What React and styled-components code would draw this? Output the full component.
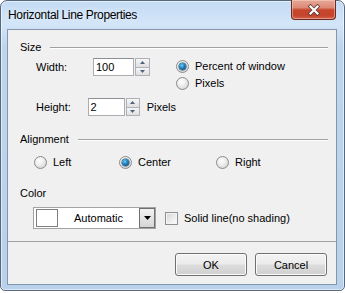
import styled, { createGlobalStyle } from "styled-components";

const Global = createGlobalStyle`
  html, body { margin: 0; padding: 0; background: #fff; }
  body { font-family: "Liberation Sans", Arial, sans-serif; font-size: 11px; color: #000; }
`;

const Window = styled.div`
  width: 345px;
  height: 291px;
  box-sizing: border-box;
  border: 1px solid #56687c;
  border-radius: 7px 7px 5px 5px;
  background: linear-gradient(to bottom, #c4dbf4 0%, #d3e5f8 8%, #bed5ee 16%, #b9d1eb 100%);
  box-shadow: inset 0 0 0 1px rgba(255, 255, 255, 0.55);
  display: flex;
  flex-direction: column;
`;

const TitleBar = styled.div`
  height: 28px;
  display: flex;
  align-items: flex-start;
  padding-left: 7px;
`;

const Title = styled.div`
  margin-top: 7px;
  font-size: 12px;
  line-height: 14px;
  letter-spacing: -0.35px;
  color: #000;
  text-shadow: 0 0 6px rgba(255, 255, 255, 0.9);
`;

const CloseButton = styled.div`
  margin-left: auto;
  margin-right: 8px;
  margin-top: -1px;
  width: 45px;
  height: 20px;
  box-sizing: border-box;
  border: 1px solid #6a2a1f;
  border-top: none;
  border-radius: 0 0 4px 4px;
  background: linear-gradient(to bottom, #e8a797 0%, #dc8a76 40%, #c7472e 52%, #c5432a 80%, #d4624a 100%);
  box-shadow: inset 0 0 0 1px rgba(255, 220, 210, 0.45);
  display: flex;
  align-items: center;
  justify-content: center;
`;

const Client = styled.div`
  height: 256px;
  margin: 0 7px 0 6px;
  box-sizing: border-box;
  border: 1px solid #8396ab;
  background: #f0f0f0;
  display: flex;
  flex-direction: column;
`;

const Body = styled.div`
  flex: 1;
  padding: 11px 8px 0 12px;
  display: flex;
  flex-direction: column;
`;

const SectionHeader = styled.div`
  display: flex;
  align-items: center;
  height: 13px;
  line-height: 13px;
  margin-top: ${({ $top }) => $top || 0}px;
`;

const Rule = styled.div`
  flex: 1;
  margin-left: 9px;
  border-top: 1px solid #a0a0a0;
  border-bottom: 1px solid #fff;
`;

const SizeBody = styled.div`
  display: flex;
  margin-top: 4px;
`;

const LeftCol = styled.div`
  width: 156px;
  box-sizing: border-box;
  padding-left: 16px;
  display: flex;
  flex-direction: column;
  gap: 22px;
`;

const FieldRow = styled.div`
  display: flex;
  align-items: center;
  height: 18px;
`;

const FieldLabel = styled.span`
  width: 57px;
`;

const TextBox = styled.div`
  width: 41px;
  height: 18px;
  box-sizing: border-box;
  border: 1px solid #abadb3;
  border-top-color: #8c8f96;
  background: #fff;
  padding-left: 2px;
  line-height: 16px;
`;

const Spinner = styled.div`
  width: 15px;
  height: 18px;
  margin-left: 1px;
  display: flex;
  flex-direction: column;
`;

const SpinButton = styled.div`
  flex: 1;
  box-sizing: border-box;
  border: 1px solid #aeb2b8;
  & + & { border-top: none; }
  background: linear-gradient(to bottom, #f6f6f6, #dfdfdf);
  display: flex;
  align-items: center;
  justify-content: center;
`;

const Unit = styled.span`
  margin-left: 7px;
`;

const RadioList = styled.div`
  display: flex;
  flex-direction: column;
  gap: 1px;
`;

const RadioRow = styled.label`
  display: flex;
  align-items: center;
  height: 16px;
`;

const RadioCircle = styled.span`
  width: 13px;
  height: 13px;
  box-sizing: border-box;
  border-radius: 50%;
  border: 1px solid #8b8b8b;
  background: radial-gradient(circle at 40% 35%, #ffffff 0%, #ececec 45%, #c9c9c9 100%);
  margin-right: 6px;
  display: flex;
  align-items: center;
  justify-content: center;
  flex-shrink: 0;

  &::after {
    content: "";
    display: ${({ $checked }) => ($checked ? "block" : "none")};
    width: 7px;
    height: 7px;
    border-radius: 50%;
    background: radial-gradient(circle at 40% 35%, #6fcdf2 0%, #1e7fbd 45%, #0a3f6b 100%);
    box-shadow: 0 0 0 0.5px #173f5f;
  }
`;

const AlignRow = styled.div`
  display: grid;
  grid-template-columns: 85px 97px auto;
  padding-left: 14px;
  margin-top: 8px;
`;

const ColorRow = styled.div`
  display: flex;
  align-items: center;
  padding-left: 13px;
  margin-top: 7px;
`;

const Combo = styled.div`
  width: 123px;
  height: 22px;
  box-sizing: border-box;
  border: 1px solid #a3a3a3;
  background: #fff;
  display: flex;
  align-items: center;
  padding-left: 2px;
`;

const Swatch = styled.div`
  width: 22px;
  height: 18px;
  box-sizing: border-box;
  border: 1px solid #7f7f7f;
  background: #fff;
`;

const ComboText = styled.span`
  margin-left: 16px;
`;

const DropButton = styled.div`
  margin-left: auto;
  width: 16px;
  height: 20px;
  box-sizing: border-box;
  border: 1px solid #6f6f6f;
  background: linear-gradient(to bottom, #f2f2f2, #d6d6d6);
  display: flex;
  align-items: center;
  justify-content: center;
`;

const CheckBox = styled.span`
  width: 13px;
  height: 13px;
  box-sizing: border-box;
  margin-left: 9px;
  margin-right: 6px;
  border: 1px solid #8e8f8f;
  background: linear-gradient(135deg, #d5d5d5 0%, #f2f2f2 70%, #fbfbfb 100%);
  box-shadow: inset 0 0 0 1px #f4f4f4;
`;

const Footer = styled.div`
  height: 43px;
  box-sizing: border-box;
  border-top: 1px solid #a0a0a0;
  display: flex;
  justify-content: flex-end;
  align-items: flex-start;
  gap: 8px;
  padding: 11px 9px 0 0;
`;

const Button = styled.button`
  width: 72px;
  height: 23px;
  box-sizing: border-box;
  border: 1px solid #707070;
  border-radius: 3px;
  background: linear-gradient(to bottom, #f3f3f3 0%, #ebebeb 48%, #dddddd 52%, #cfcfcf 100%);
  box-shadow: inset 0 0 0 1px #fbfbfb;
  font-family: "Liberation Sans", Arial, sans-serif;
  font-size: 11px;
  color: #000;
  padding: 0;
`;

function Radio({ label, checked }) {
  return (
    <RadioRow>
      <RadioCircle $checked={checked} />
      {label}
    </RadioRow>
  );
}

function SpinBox({ value }) {
  return (
    <>
      <TextBox>{value}</TextBox>
      <Spinner>
        <SpinButton>
          <svg width="5" height="3" viewBox="0 0 5 3"><path d="M0 3 L2.5 0 L5 3 Z" fill="#4d6282" /></svg>
        </SpinButton>
        <SpinButton>
          <svg width="5" height="3" viewBox="0 0 5 3"><path d="M0 0 L5 0 L2.5 3 Z" fill="#4d6282" /></svg>
        </SpinButton>
      </Spinner>
    </>
  );
}

export default function App() {
  return (
    <>
      <Global />
      <Window>
        <TitleBar>
          <Title>Horizontal Line Properties</Title>
          <CloseButton>
            <svg width="14" height="12" viewBox="0 0 14 12">
              <path d="M3.5 2.5 L10.5 9.5 M10.5 2.5 L3.5 9.5" stroke="#5a3a36" strokeWidth="3.8" strokeLinecap="square" />
              <path d="M3.5 2.5 L10.5 9.5 M10.5 2.5 L3.5 9.5" stroke="#ffffff" strokeWidth="2.2" strokeLinecap="square" />
            </svg>
          </CloseButton>
        </TitleBar>
        <Client>
          <Body>
            <SectionHeader>
              Size
              <Rule />
            </SectionHeader>
            <SizeBody>
              <LeftCol>
                <FieldRow>
                  <FieldLabel>Width:</FieldLabel>
                  <SpinBox value="100" />
                </FieldRow>
                <FieldRow>
                  <FieldLabel>Height:</FieldLabel>
                  <SpinBox value="2" />
                  <Unit>Pixels</Unit>
                </FieldRow>
              </LeftCol>
              <RadioList>
                <Radio label="Percent of window" checked />
                <Radio label="Pixels" />
              </RadioList>
            </SizeBody>

            <SectionHeader $top={17}>
              Alignment
              <Rule />
            </SectionHeader>
            <AlignRow>
              <Radio label="Left" />
              <Radio label="Center" checked />
              <Radio label="Right" />
            </AlignRow>

            <SectionHeader $top={17}>Color</SectionHeader>
            <ColorRow>
              <Combo>
                <Swatch />
                <ComboText>Automatic</ComboText>
                <DropButton>
                  <svg width="7" height="4" viewBox="0 0 7 4"><path d="M0 0 L7 0 L3.5 4 Z" fill="#000" /></svg>
                </DropButton>
              </Combo>
              <CheckBox />
              Solid line(no shading)
            </ColorRow>
          </Body>
          <Footer>
            <Button>OK</Button>
            <Button>Cancel</Button>
          </Footer>
        </Client>
      </Window>
    </>
  );
}
